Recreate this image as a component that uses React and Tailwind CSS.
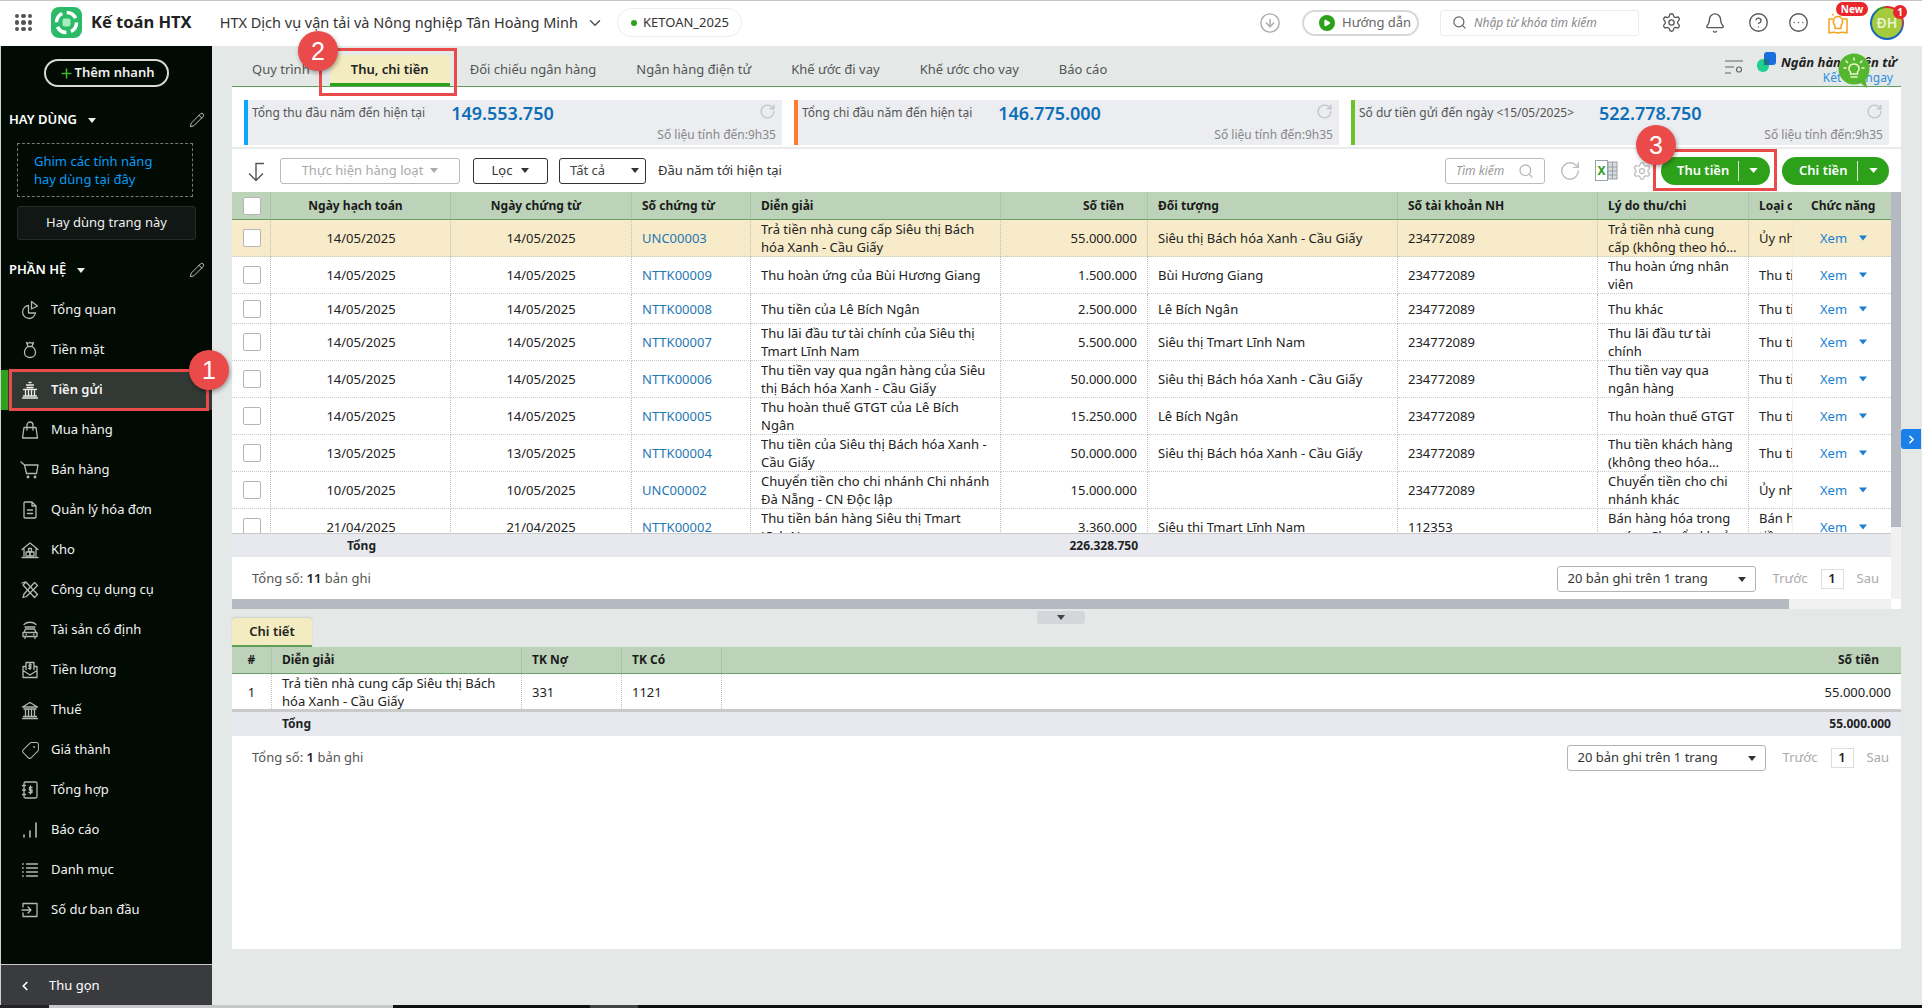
import React from "react";
import { Pencil, Plus, ChevronDown, ChevronLeft, ChevronRight, Search, Settings, Bell, CircleHelp, CircleEllipsis, CircleArrowDown, RotateCw, Tag, Play } from "lucide-react";

const Caret = ({ c = "#333", w = 9, h = 6, className = "" }) => (
  <svg width={w} height={h} viewBox="0 0 10 6" className={className}><polygon points="0,0 10,0 5,6" fill={c} /></svg>
);

const S = ({ children, c = "#b4b8b4" }) => (
  <svg width="20" height="20" viewBox="0 0 20 20" fill="none" stroke={c} strokeWidth="1.3" strokeLinecap="round" strokeLinejoin="round">{children}</svg>
);

const PieIcon = () => <S><path d="M8.500 5.500a6.500 6.500 0 1 0 7 7.500H8.500z" /><path d="M11.500 1.500l6 4.500-6 3z" /></S>;
const BagIcon = () => <S><path d="M6.500 2.500c1.200.8 2.300.8 3.500 0 1.200.8 2.300.8 3.500 0L12 6.500H8z" /><path d="M8 6.500C5.500 8 4.500 10 4.500 12.500c0 3 2.300 5 5.500 5s5.500-2 5.500-5c0-2.500-1-4.500-3.500-6" /></S>;
const BankIcon = () => <S c="#ececec"><path d="M9 2.500h2M6.500 5h7M7 7.500h6M3.500 9.500h13M5.500 11v4.500M8.500 11v4.500M11.500 11v4.500M14.500 11v4.500M3.500 16h13M2.500 18h15" /></S>;
const ShopIcon = () => <S><path d="M4 7.500h12l1.500 10.500h-15z" /><path d="M7 10V5a3 3 0 0 1 6 0v5" /></S>;
const CartIcon = () => <S><path d="M1 2l3.500 3 2 8.500h10L18 5H4.500" /><circle cx="8" cy="17" r=".8" /><circle cx="15" cy="17" r=".8" /></S>;
const DocIcon = () => <S><path d="M5 2h7l4 4v11a1 1 0 0 1-1 1H5a1 1 0 0 1-1-1V3a1 1 0 0 1 1-1zM12 2v4h4M7.500 10h5M7.500 13.500h5" /></S>;
const WareIcon = () => <S><path d="M2 9.500L10 3l8 6.500M4 8.500V16M16 8.500V16M2 17.500h16" /><rect x="8.500" y="8.500" width="3" height="3" /><rect x="6" y="12" width="4" height="4" /><rect x="10" y="12" width="4" height="4" /></S>;
const ToolsIcon = () => <S><path d="M6 2L3 5l11.500 12.500 3-3zM2 3l3-1" /><path d="M14.500 2.500l3 3L6.500 16.500l-3.500 1 1-3.500z" /></S>;
const CarIcon = () => <S><path d="M4 4.500C7 1.500 13 1.500 16 4.500M5 7h10" /><path d="M5.500 9l-1.500 3.500h12L14.500 9zM3 12.500h14v4H3zM5 16.500v2M15 16.500v2M6 14.500h.5M13.500 14.500h.5" /></S>;
const SalaryIcon = () => <S><path d="M6 9.500V2.500h8v7M6 6.500H3V17.500h14V6.500h-3M3 10.500l7 4.500 7-4.500" /><path d="M10 3.500v6M11.500 4.800H9.200v1.800h1.600v1.800H8.500" /></S>;
const TempleIcon = () => <S><path d="M2.500 7L10 2.500 17.500 7zM4 9h12M5.500 10v6M8.500 10v6M11.500 10v6M14.500 10v6M3.500 16.500h13M2.500 18.500h15" /></S>;
const TagIcon = () => <Tag size={19} strokeWidth={1.3} color="#b4b8b4" className="rotate-90" />;
const NoteIcon = () => <S><rect x="4" y="2" width="13" height="16" rx="1.500" /><path d="M2.500 5.500h3M2.500 10h3M2.500 14.500h3M10.500 6v8M12 7.500H9.500V10H12v2.500H9" /></S>;
const BarsIcon = () => <S><path d="M4 17v-2M10 17v-6M16 17V3" strokeWidth="1.600" /></S>;
const ListIcon = () => <S><path d="M2.500 4h.8M6.500 4h11M2.500 8h.8M6.500 8h11M2.500 12h.8M6.500 12h11M2.500 16h.8M6.500 16h11" /></S>;
const OpenIcon = () => <S><path d="M3 7V3.500h14v13H3V13M2 10h9M8 7l3 3-3 3" /></S>;

const nav = [
  ["Tổng quan", PieIcon], ["Tiền mặt", BagIcon], ["Tiền gửi", BankIcon, true], ["Mua hàng", ShopIcon],
  ["Bán hàng", CartIcon], ["Quản lý hóa đơn", DocIcon], ["Kho", WareIcon], ["Công cụ dụng cụ", ToolsIcon],
  ["Tài sản cố định", CarIcon], ["Tiền lương", SalaryIcon], ["Thuế", TempleIcon], ["Giá thành", TagIcon],
  ["Tổng hợp", NoteIcon], ["Báo cáo", BarsIcon], ["Danh mục", ListIcon], ["Số dư ban đầu", OpenIcon],
];

const Sb = "Siêu thị Bách hóa Xanh - Cầu Giấy";
const rows = [
  ["14/05/2025", "14/05/2025", "UNC00003", "Trả tiền nhà cung cấp Siêu thị Bách hóa Xanh - Cầu Giấy", "55.000.000", Sb, "234772089", "Trả tiền nhà cung cấp (không theo hóa đơn)", "Ủy nhiệm chi", 37],
  ["14/05/2025", "14/05/2025", "NTTK00009", "Thu hoàn ứng của Bùi Hương Giang", "1.500.000", "Bùi Hương Giang", "234772089", "Thu hoàn ứng nhân viên", "Thu tiền gửi", 37],
  ["14/05/2025", "14/05/2025", "NTTK00008", "Thu tiền của Lê Bích Ngân", "2.500.000", "Lê Bích Ngân", "234772089", "Thu khác", "Thu tiền gửi", 30],
  ["14/05/2025", "14/05/2025", "NTTK00007", "Thu lãi đầu tư tài chính của Siêu thị Tmart Lĩnh Nam", "5.500.000", "Siêu thị Tmart Lĩnh Nam", "234772089", "Thu lãi đầu tư tài chính", "Thu tiền gửi", 37],
  ["14/05/2025", "14/05/2025", "NTTK00006", "Thu tiền vay qua ngân hàng của Siêu thị Bách hóa Xanh - Cầu Giấy", "50.000.000", Sb, "234772089", "Thu tiền vay qua ngân hàng", "Thu tiền gửi", 37],
  ["14/05/2025", "14/05/2025", "NTTK00005", "Thu hoàn thuế GTGT của Lê Bích Ngân", "15.250.000", "Lê Bích Ngân", "234772089", "Thu hoàn thuế GTGT", "Thu tiền gửi", 37],
  ["13/05/2025", "13/05/2025", "NTTK00004", "Thu tiền của Siêu thị Bách hóa Xanh - Cầu Giấy", "50.000.000", Sb, "234772089", "Thu tiền khách hàng (không theo hóa đơn)", "Thu tiền gửi", 37],
  ["10/05/2025", "10/05/2025", "UNC00002", "Chuyển tiền cho chi nhánh Chi nhánh Đà Nẵng - CN Độc lập", "15.000.000", "", "234772089", "Chuyển tiền cho chi nhánh khác", "Ủy nhiệm chi", 37],
  ["21/04/2025", "21/04/2025", "NTTK00002", "Thu tiền bán hàng Siêu thị Tmart Lĩnh Nam", "3.360.000", "Siêu thị Tmart Lĩnh Nam", "112353", "Bán hàng hóa trong nước - Chuyển khoản", "Bán hàng thu tiền gửi", 37],
];

const thCls = "border-r border-[#a9c6a7] border-b border-b-[#6b9f69] text-[12px] font-bold text-[#1b1b1b] p-0 overflow-hidden whitespace-nowrap";
const tdBase = "border-r border-dotted border-r-[#bdbdbd] border-b border-b-[#c9c9c9] py-0 text-[13px] leading-[18px] overflow-hidden";
const tdCls = `${tdBase} px-[10px]`;

function Pager({ total }) {
  return (
    <div className="flex items-center justify-between pl-5 pr-3 pt-[2px] h-[42px] text-[13px]">
      <span className="text-[#555]">Tổng số: <b className="font-semibold text-[#222]">{total}</b> bản ghi</span>
      <div className="flex items-center">
        <div className="w-[199px] h-[26px] border border-[#b4b4b4] rounded-[3px] bg-white flex items-center justify-between pl-[10px] pr-[9px] text-[#333]">
          <span>20 bản ghi trên 1 trang</span><Caret c="#333" w={8} h={5} />
        </div>
        <span className="ml-[17px] text-[#aaa]">Trước</span>
        <span className="ml-[13px] w-[23px] h-[20px] border border-[#ddd] flex items-center justify-center font-semibold text-[#222]">1</span>
        <span className="ml-[13px] text-[#aaa]">Sau</span>
      </div>
    </div>
  );
}

function Annot({ n, cls }) {
  return <div className={`absolute w-10 h-10 rounded-full bg-[#ea4a4a] text-white text-[25px] leading-[40px] text-center font-['Liberation_Sans',sans-serif] shadow-[1px_2px_4px_rgba(0,0,0,0.35)] ${cls}`}>{n}</div>;
}

function Stat({ w, color, label, value, gap }) {
  return (
    <div className={`${w} h-[45px] bg-[#ebedf0] flex relative`}>
      <div className={`w-1 h-full ${color}`} />
      <div className="pl-[4px] flex items-center h-[26px] text-[12px] text-[#555]">
        <span>{label}</span>
        <span className={`${gap} text-[18px] font-semibold leading-[26px] text-[#0d6fb8]`}>{value}</span>
      </div>
      <RotateCw size={17} color="#c3c6ca" strokeWidth={2} className="absolute right-[6px] top-[3px]" />
      <span className="absolute right-[6px] top-[27px] text-[12px] leading-4 text-[#888]">Số liệu tính đến:9h35</span>
    </div>
  );
}

function SplitBtn({ label, w, pl, capGap }) {
  return (
    <div className={`${w} h-7 rounded-full bg-[#2ea11a] flex items-center ${pl} text-white text-[13px] font-semibold`}>
      <span>{label}</span>
      <span className="ml-[9px] w-px h-[20px] bg-white/80" />
      <Caret c="#fff" w={9} h={5} className={capGap} />
    </div>
  );
}

export default function App() {
  return (
    <div className="relative w-[1922px] h-[1008px] overflow-hidden flex flex-col bg-white font-['Noto_Sans',sans-serif]">
      {/* top bar */}
      <header className="h-[46px] shrink-0 border-t border-[#c4c4c4] bg-white flex items-center pr-[18px] pb-[2px]">
        <div className="ml-[15px] w-[17px] h-[17px] grid grid-cols-3 gap-[2px]">
          {[...Array(9)].map((_, i) => <span key={i} className="bg-[#555] rounded-full" />)}
        </div>
        <svg width="31" height="31" viewBox="0 0 31 31" className="ml-[19px]">
          <rect width="31" height="31" rx="8" fill="#2bbb68" />
          <circle cx="15.500" cy="15.500" r="10" fill="none" stroke="#fff" strokeWidth="3.500" strokeDasharray="11 4.700" />
          <rect x="11.500" y="11.500" width="8" height="8" rx="2" fill="#a6ecbe" />
        </svg>
        <span className="ml-[9px] text-[16.5px] font-bold text-[#222] whitespace-nowrap">Kế toán HTX</span>
        <span className="ml-[28px] text-[14.5px] text-[#333] whitespace-nowrap">HTX Dịch vụ vận tải và Nông nghiệp Tân Hoàng Minh</span>
        <ChevronDown size={18} color="#555" className="ml-[8px]" />
        <div className="ml-[13px] w-[125px] h-[29px] rounded-full border border-[#ececec] flex items-center pl-[13px] text-[13px] text-[#333]">
          <span className="w-[6px] h-[6px] rounded-full bg-[#2ea11a] mr-[6px]" />KETOAN_2025
        </div>
        <CircleArrowDown size={22} color="#a9a9a9" strokeWidth={1.5} className="ml-auto" />
        <div className="ml-[21px] w-[117px] h-[26px] rounded-full border-2 border-[#d8d8d8] flex items-center pl-[15px] text-[13px] text-[#666]">
          <span className="w-4 h-4 rounded-full bg-[#2ea11a] flex items-center justify-center mr-[7px]"><Play size={8} fill="#fff" color="#fff" /></span>Hướng dẫn
        </div>
        <div className="ml-[21px] w-[199px] h-[26px] rounded-[3px] border border-[#ececec] flex items-center pl-[11px] text-[12px] italic text-[#888]">
          <Search size={15} color="#666" className="mr-[7px]" />Nhập từ khóa tìm kiếm
        </div>
        <Settings size={21} color="#555" strokeWidth={1.5} className="ml-[22px]" />
        <Bell size={22} color="#555" strokeWidth={1.5} className="ml-[22px]" />
        <CircleHelp size={21} color="#555" strokeWidth={1.5} className="ml-[22px]" />
        <CircleEllipsis size={21} color="#555" strokeWidth={1.5} className="ml-[19px]" />
        <div className="ml-[17px] relative w-6 h-6">
          <svg width="24" height="24" viewBox="0 0 24 24" fill="none" stroke="#f5a21e" strokeWidth="1.500" strokeLinejoin="round">
            <path d="M7 8H3v14c3-1 6-1 9 0 3-1 6-1 9 0V8h-4" />
            <path d="M9 14.500c-3-3-1.500-9 3-9s6 6 3 9v3H9zM12 1v2M6.500 3l1 1.500M17.500 3l-1 1.500" />
          </svg>
          <span className="absolute left-[10px] -top-[9px] w-[32px] h-[14px] rounded-full bg-[#e8262b] text-white text-[10px] font-bold leading-[14px] text-center">New</span>
        </div>
        <div className="ml-[20px] relative w-[34px] h-[34px] rounded-full p-[2px] bg-[conic-gradient(#e8262b_0deg,#e8262b_70deg,#1565c0_120deg,#1565c0_300deg,#2ea11a_340deg,#e8262b_360deg)]">
          <div className="w-full h-full rounded-full bg-[#a5cb3c] flex items-center justify-center text-[#e8f3d0] text-[14px] font-semibold">ĐH</div>
          <span className="absolute -right-[3px] -top-[1px] w-[14px] h-[14px] rounded-full bg-[#e8262b] text-white text-[10px] font-bold leading-[14px] text-center">1</span>
        </div>
      </header>

      <div className="flex-1 min-h-0 flex border-l border-[#d0d0d0]">
        {/* sidebar */}
        <aside className="w-[211px] shrink-0 bg-[#020a04] flex flex-col text-white">
          <div className="mt-[13px] ml-[43px] w-[125px] h-7 rounded-full border-2 border-[#d8d8d8] flex items-center justify-center text-[13px] font-semibold text-[#eee]">
            <Plus size={15} color="#3fb52b" strokeWidth={2.500} className="mr-[1px]" />Thêm nhanh
          </div>
          <div className="mt-[23px] h-5 flex items-center pl-2 pr-[7px] text-[13px] font-semibold">
            HAY DÙNG<Caret c="#eee" w={8} h={5} className="ml-[11px]" /><Pencil size={16} strokeWidth={1.1} className="ml-auto" />
          </div>
          <div className="mt-[13px] ml-4 w-[176px] h-[54px] border border-dashed border-[#777] pl-[16px] pt-[8px] text-[13px] leading-[18px] text-[#0a9bf5]">
            Ghim các tính năng<br />hay dùng tại đây
          </div>
          <div className="mt-[9px] ml-4 w-[179px] h-[34px] rounded-[3px] bg-[#111714] border border-[#272c29] flex items-center justify-center text-[13px] text-[#eee]">Hay dùng trang này</div>
          <div className="mt-5 h-5 flex items-center pl-2 pr-[7px] text-[13px] font-semibold">
            PHẦN HỆ<Caret c="#eee" w={8} h={5} className="ml-[11px]" /><Pencil size={16} strokeWidth={1.1} className="ml-auto" />
          </div>
          <nav className="mt-[10px]">
            {nav.map(([t, Ic, active]) => (
              <div key={t} className={`h-10 flex items-center text-[13px] ${active ? "bg-[#323833] border-l-[7px] border-[#2ea11a] pl-[12px] font-semibold" : "pl-[19px]"}`}>
                <span className="w-5 h-5 flex items-center justify-center"><Ic /></span>
                <span className="ml-[11px] text-[#f2f2f2]">{t}</span>
              </div>
            ))}
          </nav>
          <div className="mt-auto h-[41px] bg-[#3a3b3f] border-t border-[#c8c8c8] pt-[1px] flex items-center pl-[17px] text-[13px]">
            <ChevronLeft size={14} strokeWidth={3} /><span className="ml-[17px]">Thu gọn</span>
          </div>
        </aside>

        {/* main */}
        <main className="flex-1 min-w-0 bg-[#e4e8e7] pl-5 pr-[21px] flex flex-col">
          <div className="relative h-[41px] shrink-0 flex items-end border-b border-[#5d9e58] text-[13px] text-[#555]">
            {["Quy trình", "Thu, chi tiền", "Đối chiếu ngân hàng", "Ngân hàng điện tử", "Khế ước đi vay", "Khế ước cho vay", "Báo cáo"].map((t) =>
              t === "Thu, chi tiền" ? (
                <div key={t} className="h-[31px] w-[120px] pt-[1px] bg-[#f3ecc0] border-b-[3px] border-[#2ea11a] rounded-t-[4px] flex items-center justify-center font-semibold text-[#222]">{t}</div>
              ) : (
                <div key={t} className="h-[31px] pb-[2px] px-[20px] flex items-center whitespace-nowrap">{t}</div>
              )
            )}
            <svg width="19" height="15" viewBox="0 0 19 15" fill="none" stroke="#666" strokeWidth="1.200" className="ml-auto mb-[11px] mr-[13px]">
              <path d="M0 1h18M0 7h9M0 13h6" /><circle cx="14" cy="9.500" r="2.500" />
            </svg>
            <svg width="19" height="20" viewBox="0 0 19 20" className="mb-[14px] mr-[5px]">
              <rect x="7" y="0" width="12" height="13" rx="3" fill="#1a6fe0" />
              <rect x="0" y="7" width="12" height="13" rx="6" fill="#1fcf8e" />
              <rect x="7" y="7" width="5" height="6" fill="#1f6f8e" />
            </svg>
            <div className="mb-[1px] mr-2 text-right leading-[15px] w-[112px]">
              <div className="text-[13px] font-bold italic text-[#222] whitespace-nowrap">Ngân hàng điện tử</div>
              <div className="text-[12px] text-[#2f8fe0]">Kết nối ngay</div>
            </div>
          </div>

          <div className="shrink-0 bg-white h-[522px] flex flex-col">
            <div className="px-3 pt-[13px] pb-[2px] flex gap-3 border-b-2 border-[#e8ebea]">
              <Stat w="w-[538px]" color="bg-[#0ea5ff]" label="Tổng thu đầu năm đến hiện tại" value="149.553.750" gap="ml-[26px]" />
              <Stat w="w-[545px]" color="bg-[#ff7a2a]" label="Tổng chi đầu năm đến hiện tại" value="146.775.000" gap="ml-[26px]" />
              <Stat w="w-[538px]" color="bg-[#6cc32a]" label="Số dư tiền gửi đến ngày <15/05/2025>" value="522.778.750" gap="ml-[25px]" />
            </div>
            <div className="h-[43px] shrink-0 flex items-center pl-[15px] pr-3 text-[13px]">
              <svg width="18" height="20" viewBox="0 0 18 20" fill="none" stroke="#555" strokeWidth="1.400" className="mt-[2px]"><path d="M17 1.500H9V18.500M2 11.500l7 7 7-7" /></svg>
              <div className="ml-[15px] w-[180px] h-[26px] border border-[#bbb] rounded-[3px] flex items-center justify-center text-[#aaa]">Thực hiện hàng loạt<Caret c="#aaa" w={8} h={5} className="ml-[7px]" /></div>
              <div className="ml-[13px] w-[75px] h-[26px] border border-[#333] rounded-[3px] flex items-center justify-center text-[#333]">Lọc<Caret c="#333" w={8} h={5} className="ml-[9px]" /></div>
              <div className="ml-[11px] w-[87px] h-[26px] border border-[#333] rounded-[3px] flex items-center justify-between pl-[10px] pr-[6px] text-[#444]">Tất cả<Caret c="#333" w={8} h={5} /></div>
              <span className="ml-3 text-[#333]">Đầu năm tới hiện tại</span>
              <div className="ml-auto w-[100px] h-[26px] border border-[#bbb] rounded-[3px] flex items-center justify-between pl-[10px] pr-[10px] italic text-[12px] text-[#999]">Tìm kiếm<Search size={16} color="#bbb" /></div>
              <RotateCw size={22} color="#b8bcc0" strokeWidth={1.5} className="ml-[14px]" />
              <svg width="23" height="21" viewBox="0 0 23 21" className="ml-[14px]">
                <rect x="8" y="2" width="14" height="17" fill="#d9dde2" stroke="#9aa0a8" />
                <path d="M13 2v17M17.500 2v17M8 7h14M8 11h14M8 15h14" stroke="#9aa0a8" />
                <rect x="0.500" y="0.500" width="12" height="20" fill="#fff" stroke="#9aa0a8" />
                <text x="6.500" y="15" fontSize="12" fontWeight="700" fill="#2ea11a" textAnchor="middle">X</text>
              </svg>
              <Settings size={20} color="#bbb" strokeWidth={1.5} className="ml-[14px]" />
              <div className="ml-[9px]"><SplitBtn label="Thu tiền" w="w-[109px]" pl="pl-[16px]" capGap="ml-[10px]" /></div>
              <div className="ml-3"><SplitBtn label="Chi tiền" w="w-[107px]" pl="pl-[17px]" capGap="ml-[11px]" /></div>
            </div>

            <div className="flex h-[407px]">
              <div className="w-[1659px] flex flex-col">
                <div className="h-[341px] overflow-hidden">
                  <table className="table-fixed w-[1659px] border-separate border-spacing-0">
                    <colgroup>
                      <col className="w-[39px]" /><col className="w-[180px]" /><col className="w-[181px]" /><col className="w-[119px]" /><col className="w-[250px]" /><col className="w-[147px]" /><col className="w-[250px]" /><col className="w-[200px]" /><col className="w-[151px]" /><col className="w-[43px]" /><col className="w-[99px]" />
                    </colgroup>
                    <thead>
                      <tr className="h-[28px] bg-[#bcd3b9]">
                        <th className={thCls}><div className="ml-[11px] w-[18px] h-[18px] bg-white border border-[#b5b5b5] rounded-[2px]" /></th>
                        <th className={`${thCls} text-center pr-[10px]`}>Ngày hạch toán</th>
                        <th className={`${thCls} text-center pr-[10px]`}>Ngày chứng từ</th>
                        <th className={`${thCls} text-left pl-[10px]`}>Số chứng từ</th>
                        <th className={`${thCls} text-left pl-[10px]`}>Diễn giải</th>
                        <th className={`${thCls} text-right pr-[23px]`}>Số tiền</th>
                        <th className={`${thCls} text-left pl-[10px]`}>Đối tượng</th>
                        <th className={`${thCls} text-left pl-[10px]`}>Số tài khoản NH</th>
                        <th className={`${thCls} text-left pl-[10px]`}>Lý do thu/chi</th>
                        <th className={`${thCls} text-left pl-[10px] border-r-0`}><div className="w-[90px]">Loại chứng từ</div></th>
                        <th className={`${thCls} text-left pl-[19px] border-r-0`}>Chức năng</th>
                      </tr>
                    </thead>
                    <tbody className="text-[#222]">
                      {rows.map((r, i) => (
                        <tr key={i} className={i === 0 ? "bg-[#f7ebc9]" : ""} style={{ height: r[9] }}>
                          <td className={`${tdBase} px-0`}><div className="ml-[11px] w-[18px] h-[18px] bg-white border border-[#b5b5b5] rounded-[2px]" /></td>
                          <td className={`${tdBase} pr-[10px] pl-[11px] text-center`}>{r[0]}</td>
                          <td className={`${tdCls} text-center`}>{r[1]}</td>
                          <td className={`${tdCls} text-[#1f77b4]`}>{r[2]}</td>
                          <td className={tdCls}><div className="max-h-[36px] overflow-hidden">{r[3]}</div></td>
                          <td className={`${tdCls} text-right`}>{r[4]}</td>
                          <td className={`${tdCls} whitespace-nowrap`}>{r[5]}</td>
                          <td className={tdCls}>{r[6]}</td>
                          <td className={tdCls}><div className="line-clamp-2">{r[7]}</div></td>
                          <td className={`${tdBase} pl-[10px] pr-0 border-r-0`}><div className="w-[90px] max-h-[36px]">{r[8]}</div></td>
                          <td className={`${tdBase} border-l border-l-[#e2e2e2] border-r-0 pl-[27px] pr-0 text-[#1a7fd0]`}>
                            <span className="inline-flex items-center">Xem<Caret c="#1a7fd0" w={8} h={6} className="ml-[12px]" /></span>
                          </td>
                        </tr>
                      ))}
                    </tbody>
                  </table>
                </div>
                <div className="h-[24px] shrink-0 bg-[#e7e9ef] border-t border-[#c9c9c9] flex items-center text-[12px] font-bold text-[#222]">
                  <span className="w-[220px] text-center pl-[39px]">Tổng</span>
                  <span className="w-[686px] text-right">226.328.750</span>
                </div>
                <Pager total="11" />
              </div>
              <div className="w-[10px] bg-[#f1f1f1]"><div className="h-[335px] bg-[#b5b9c2]" /></div>
            </div>
            <div className="h-[10px] shrink-0 flex">
              <div className="w-[1557px] bg-[#b5b9c2]" />
              <div className="w-[102px] bg-[#f1f1f1]" />
            </div>
          </div>

          <div className="relative pt-[9px] shrink-0">
            <div className="absolute left-[805px] top-[2px] w-[48px] h-[13px] rounded-[3px] bg-[#d3d6da] flex items-center justify-center"><Caret c="#444" w={8} h={5} /></div>
            <div className="w-[80px] h-[29px] rounded-t-[4px] bg-[#f3ecc0] border-b-2 border-[#5d9e58] flex items-center justify-center text-[13px] font-semibold text-[#222] shadow-[0_-1px_2px_rgba(0,0,0,0.1)]">Chi tiết</div>
          </div>
          <div className="shrink-0 h-[302px] bg-white">
            <div className="h-[27px] bg-[#bcd3b9] border-b border-[#6b9f69] flex items-center text-[12px] font-bold text-[#1b1b1b]">
              <span className="w-[40px] h-full flex items-center justify-center border-r border-[#a9c6a7]">#</span>
              <span className="w-[250px] h-full flex items-center pl-[10px] border-r border-[#a9c6a7]">Diễn giải</span>
              <span className="w-[100px] h-full flex items-center pl-[10px] border-r border-[#a9c6a7]">TK Nợ</span>
              <span className="w-[100px] h-full flex items-center pl-[10px] border-r border-[#a9c6a7]">TK Có</span>
              <span className="flex-1 text-right pr-[22px]">Số tiền</span>
            </div>
            <div className="h-[38px] border-b-[3px] border-[#c9c9c9] flex text-[13px] leading-[18px] text-[#222]">
              <span className="w-[40px] flex items-center justify-center border-r border-dotted border-[#bdbdbd]">1</span>
              <span className="w-[250px] flex items-center px-[10px] border-r border-dotted border-[#bdbdbd]">Trả tiền nhà cung cấp Siêu thị Bách hóa Xanh - Cầu Giấy</span>
              <span className="w-[100px] flex items-center px-[10px] border-r border-dotted border-[#bdbdbd]">331</span>
              <span className="w-[100px] flex items-center px-[10px] border-r border-dotted border-[#bdbdbd]">1121</span>
              <span className="flex-1 flex items-center justify-end pr-[10px]">55.000.000</span>
            </div>
            <div className="h-[24px] bg-[#e7e9ef] flex items-center text-[12px] font-bold text-[#222]">
              <span className="pl-[50px]">Tổng</span><span className="ml-auto pr-[10px]">55.000.000</span>
            </div>
            <Pager total="1" />
          </div>
        </main>
      </div>
      <div className="h-[3px] shrink-0 flex bg-[#111]">
        <div className="w-[49px] bg-[#222]" />
        <div className="w-[344px] bg-[#c8c8c8]" />
        <div className="w-[197px]" />
        <div className="w-[48px] bg-[#444]" />
      </div>

      {/* overlays */}
      <div className="absolute left-[319px] top-[48px] w-[138px] h-[48px] border-[3px] border-[#ea4a4a]" />
      <div className="absolute left-[9px] top-[369px] w-[200px] h-[42px] border-[3px] border-[#ea4a4a]" />
      <div className="absolute left-[1653px] top-[149px] w-[124px] h-[42px] border-[3px] border-[#ea4a4a]" />
      <Annot n="2" cls="left-[298px] top-[31px]" />
      <Annot n="1" cls="left-[189px] top-[350px]" />
      <Annot n="3" cls="left-[1636px] top-[125px]" />
      <svg width="34" height="36" viewBox="0 0 34 36" fill="none" className="absolute left-[1838px] top-[53px]">
        <circle cx="16" cy="16" r="15.500" fill="#55b62f" />
        <polygon points="20,28 29,35 27,24" fill="#55b62f" />
        <g stroke="#eef8cf" strokeWidth="1.500" strokeLinecap="round">
          <path d="M12.500 19c-3-3-1.500-8 3.500-8s6.500 5 3.500 8v2h-7zM13 24h6M16 5v2M8 8l1.500 1.500M24 8l-1.500 1.500M6 15h2M24 15h2" />
        </g>
      </svg>
      <div className="absolute left-[1901px] top-[429px] w-[20px] h-[20px] rounded-l-[3px] bg-[#1a7fe8] flex items-center justify-center"><ChevronRight size={13} color="#fff" strokeWidth={3} /></div>
    </div>
  );
}
